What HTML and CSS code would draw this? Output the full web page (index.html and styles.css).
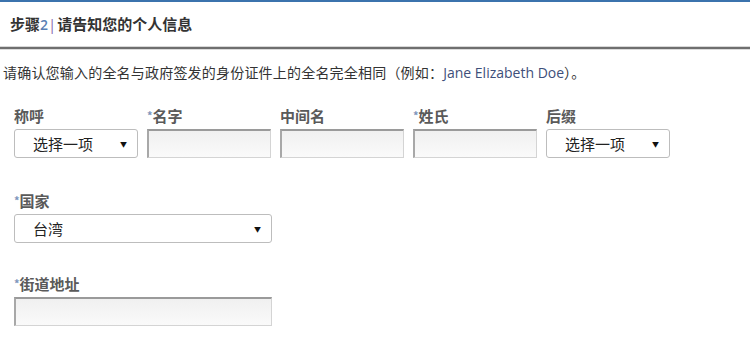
FILE: index.html
```html
<!DOCTYPE html>
<html lang="zh-CN">
<head>
    <meta charset="UTF-8">
    <meta name="viewport" content="width=device-width, initial-scale=1.0">
    <title>个人信息</title>
    <link rel="stylesheet" href="styles.css">
</head>
<body>
    <div class="step-header">
        <h2>步骤<span class="step-num">2</span><span class="step-bar">|</span>请告知您的个人信息</h2>
    </div>
    <div class="divider"></div>

    <p class="intro">请确认您输入的全名与政府签发的身份证件上的全名完全相同（例如：<span class="example">Jane Elizabeth Doe</span>）。</p>

    <form class="info-form">
        <div class="name-row">
            <div class="field">
                <label>称呼</label>
                <div class="select-box"><span>选择一项</span><span class="arrow">▼</span></div>
            </div>
            <div class="field">
                <label><span class="req">*</span>名字</label>
                <input type="text" class="text-input">
            </div>
            <div class="field">
                <label>中间名</label>
                <input type="text" class="text-input">
            </div>
            <div class="field">
                <label><span class="req">*</span>姓氏</label>
                <input type="text" class="text-input">
            </div>
            <div class="field">
                <label>后缀</label>
                <div class="select-box"><span>选择一项</span><span class="arrow">▼</span></div>
            </div>
        </div>

        <div class="field wide country">
            <label><span class="req">*</span>国家</label>
            <div class="select-box"><span>台湾</span><span class="arrow">▼</span></div>
        </div>

        <div class="field wide street">
            <label><span class="req">*</span>街道地址</label>
            <input type="text" class="text-input">
        </div>
    </form>
</body>
</html>
```

FILE: styles.css
```css
body {
    font-family: 'Noto Sans CJK SC', sans-serif;
    background-color: #ffffff;
    color: #333333;
    margin: 0;
    padding: 0;
    border-top: 2px solid #3b73ad;
}

.step-header {
    height: 44px;
    display: flex;
    align-items: center;
    padding-left: 10px;
}

.step-header h2 {
    margin: 0;
    font-size: 15px;
    font-weight: 700;
    color: #333333;
    line-height: 1;
}

.step-num {
    color: #5a7fb4;
    font-family: 'Open Sans', sans-serif;
    font-weight: 600;
    font-size: 14px;
}

.step-bar {
    color: #8a6bb0;
    font-family: 'Open Sans', sans-serif;
    font-weight: 400;
    margin: 0 1px 0 0;
}

.divider {
    height: 2px;
    background-color: #6f6f6f;
    border-top: 1px solid #d8d8d8;
    border-bottom: 1px solid #dcdcdc;
}

.intro {
    margin: 12px 0 0 3px;
    font-size: 14px;
    line-height: 20px;
    letter-spacing: 0.2px;
    color: #333333;
}

.example {
    font-family: 'Open Sans', sans-serif;
    color: #3e4f7a;
    font-size: 14px;
    letter-spacing: 0;
}

.info-form {
    padding-left: 14px;
    margin-top: 24px;
}

.name-row {
    display: flex;
    gap: 9px;
}

.field {
    width: 124px;
}

.field.wide {
    width: 258px;
}

.field.country {
    margin-top: 34px;
}

.field.street {
    margin-top: 32px;
}

label {
    display: block;
    height: 18px;
    font-size: 15px;
    font-weight: 700;
    color: #5a5a5a;
    line-height: 18px;
    margin-bottom: 4px;
}

.req {
    color: #7d95bb;
    font-size: 11px;
    font-weight: 700;
    line-height: 0;
    vertical-align: 2px;
}

.select-box {
    height: 29px;
    box-sizing: border-box;
    border: 1px solid #bdbdbd;
    border-radius: 3px;
    background-color: #ffffff;
    display: flex;
    align-items: center;
    justify-content: space-between;
    padding: 0 10px 0 18px;
    font-size: 15px;
    color: #222222;
}

.arrow {
    font-size: 7px;
    color: #111111;
}

.text-input {
    display: block;
    width: 100%;
    height: 29px;
    box-sizing: border-box;
    margin: 0;
    border: 1px solid #d4d4d4;
    border-top: 2px solid #9a9a9a;
    border-left: 2px solid #a8a8a8;
    background: linear-gradient(#f0f0f0, #fafafa);
    font-size: 14px;
}
```
